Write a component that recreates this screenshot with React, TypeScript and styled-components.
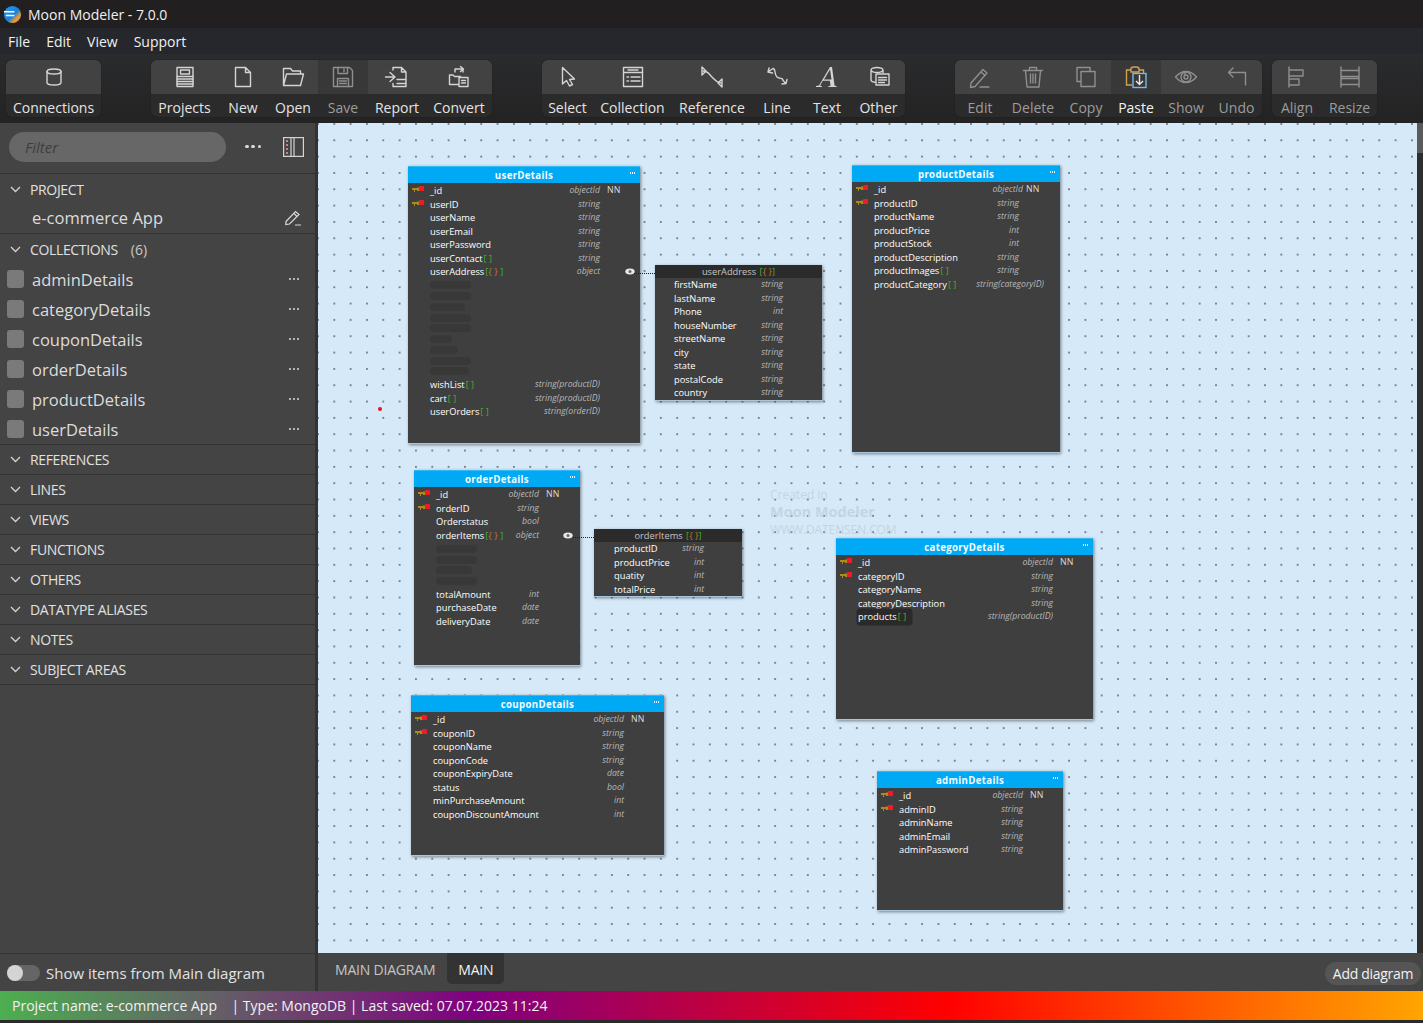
import React from "react";
import styled, { createGlobalStyle } from "styled-components";

const Global = createGlobalStyle`
  html, body { margin: 0; padding: 0; height: 100%; overflow: hidden; background: #2a2a2a; }
  * { box-sizing: border-box; }
  #root { height: 100%; font-family: "Open Sans", "Noto Sans", sans-serif; }
`;

const Page = styled.div`
  width: 1423px; height: 1023px; display: flex; flex-direction: column; background: #262626; color: #eee;
`;
const TitleBar = styled.div`
  height: 28px; flex: none; display: flex; align-items: center; gap: 6px; padding-left: 3px;
  background: #211f1f; font-size: 14px; color: #f0f0f0;
`;
const MenuBar = styled.div`
  height: 26px; flex: none; display: flex; align-items: center; gap: 16px; padding-left: 8px;
  background: #25272c; font-size: 14px; color: #f0f0f0;
`;
const Toolbar = styled.div`
  height: 69px; flex: none; padding: 6px 0 0 6px; display: flex; align-items: flex-start;
  background: linear-gradient(#2a2b2d, #232323);
`;
const ToolGroup = styled.div<{ $gap: number }>`
  margin-right: ${p => p.$gap}px; display: flex; height: 57px; border-radius: 6px; overflow: hidden;
  background: #2b2b2b; box-shadow: 0 0 1px #111;
`;
const ToolItem = styled.div<{ $w: number; $dim?: boolean; $hi?: boolean; $bright?: boolean }>`
  width: ${p => p.$w}px; display: flex; flex-direction: column; align-items: center;
  font-size: 14px; color: ${p => (p.$bright ? "#f2f2f2" : p.$dim ? "#9c9c9c" : "#e4e4e4")};
`;
const ToolIcon = styled.div<{ $hi?: boolean }>`
  width: 100%; height: 34px; flex: none; display: flex; align-items: center; justify-content: center;
  background: ${p => (p.$hi ? "#383838" : "#424242")};
`;
const ToolLabel = styled.div`
  height: 23px; line-height: 27px; white-space: nowrap;
`;
const Main = styled.div`
  flex: 1; min-height: 0; display: flex;
`;
const Sidebar = styled.div`
  width: 315px; flex: none; display: flex; flex-direction: column; background: #444;
`;
const Divider = styled.div`
  width: 3px; flex: none; background: #333;
`;
const FilterRow = styled.div`
  height: 51px; flex: none; display: flex; align-items: center; padding: 0 0 3px 9px; border-bottom: 1px solid #333;
`;
const FilterPill = styled.div`
  width: 217px; height: 30px; border-radius: 15px; background: #676767; padding: 0 16px;
  display: flex; align-items: center; font-size: 15px; font-style: italic; color: #3e3e3e;
`;
const Dots = styled.div`
  margin-left: 19px; width: 16px; display: flex; justify-content: space-between;
  span { width: 3.5px; height: 3.5px; border-radius: 50%; background: #d8d8d8; }
`;
const SectionRow = styled.div`
  height: 30px; flex: none; display: flex; align-items: center; padding-left: 10px; gap: 9px;
  font-size: 14px; color: #e0e0e0; letter-spacing: -0.35px; border-bottom: 1px solid #333;
`;
const SectionOpen = styled(SectionRow)`
  border-bottom: none;
`;
const Count = styled.span`
  margin-left: 4px; letter-spacing: 0; color: #c8c8c8;
`;
const ProjectRow = styled.div`
  height: 30px; flex: none; display: flex; align-items: center; justify-content: space-between;
  padding: 0 14px 2px 32px; font-size: 16.5px; color: #dcdcdc; border-bottom: 1px solid #333;
`;
const CollectionList = styled.div`
  display: flex; flex-direction: column; border-bottom: 1px solid #333;
`;
const CollectionRow = styled.div`
  height: 30px; display: flex; align-items: center; padding: 0 16px 0 7px; font-size: 16.5px; color: #dcdcdc;
`;
const Swatch = styled.div`
  width: 17px; height: 18px; border-radius: 3px; background: #7a7a7a; margin-right: 8px;
`;
const CollectionName = styled.span`
  flex: 1;
`;
const MiniDots = styled.div`
  display: flex; gap: 1.5px;
  span { width: 2.5px; height: 2.5px; border-radius: 50%; background: #d8d8d8; }
`;
const SideBottom = styled.div`
  margin-top: auto; height: 38px; flex: none; display: flex; align-items: center; gap: 6px; padding-left: 7px;
  border-top: 1px solid #333; font-size: 15px; color: #e2e2e2;
`;
const Toggle = styled.div`
  width: 33px; height: 16px; border-radius: 8px; background: #656565; position: relative;
  &::before { content: ""; position: absolute; left: 0; top: 0; width: 16px; height: 16px; border-radius: 50%; background: #d4d4d4; }
`;
const Right = styled.div`
  flex: 1; min-width: 0; display: flex; flex-direction: column;
`;
const CanvasRow = styled.div`
  flex: 1; min-height: 0; display: flex;
`;
const Canvas = styled.div`
  flex: 1; position: relative; overflow: hidden; background-color: #d6e9f8;
  background-image: radial-gradient(circle at 1px 1px, #7d858c 0, #7d858c 1px, transparent 1.3px);
  background-size: 16.33px 16.33px; background-position: -1px 0px;
`;
const Scrollbar = styled.div`
  width: 6px; flex: none; background: #2e2e2e;
  &::before { content: ""; display: block; height: 30px; background: #5a5a5a; }
`;
const TabBar = styled.div`
  height: 38px; flex: none; display: flex; align-items: flex-start; background: #444; padding-left: 17px; font-size: 14px;
`;
const Tab = styled.div`
  height: 31px; line-height: 33px; color: #c4c4c4; letter-spacing: -0.2px; margin-right: 12px;
`;
const ActiveTab = styled.div`
  height: 31px; line-height: 33px; padding: 0 11px; color: #f2f2f2; background: #333; border-radius: 0 0 5px 5px; letter-spacing: -0.2px;
`;
const AddButton = styled.div`
  margin: 9px 2px 0 auto; height: 23px; line-height: 23px; width: 96px; text-align: center; border-radius: 12px;
  background: #555; color: #f2f2f2; font-size: 14px; letter-spacing: -0.3px;
`;
const StatusBar = styled.div`
  height: 29px; flex: none; display: flex; align-items: center; padding: 0 0 1px 12px; white-space: pre;
  background: linear-gradient(90deg, #4caf50, #800080 33.3%, #f00 66.6%, #ffa500); font-size: 14px; color: #f2f2f2;
`;
const FootEdge = styled.div`
  height: 3px; flex: none; background: #2a2a2a;
`;

const Node = styled.div<{ $x: number; $y: number; $w: number; $h: number }>`
  position: absolute; left: ${p => p.$x - 318}px; top: ${p => p.$y - 123}px; width: ${p => p.$w}px; height: ${p => p.$h}px;
  background: #3f3f3f; box-shadow: 1px 1px 3px rgba(0,0,0,.45); border: 1px solid #a9c6dc; border-width: 0 0 1px 0;
  font-size: 9.3px; color: #fff;
`;
const NodeHead = styled.div`
  height: 17px; background: #00a9f4; border-top: 1px solid #35b9f5; position: relative; text-align: center;
  font-weight: 700; font-size: 9.7px; line-height: 17px; letter-spacing: 0.3px; color: #f4fbff;
`;
const HeadDots = styled.div`
  position: absolute; right: 5px; top: 5px; display: flex; gap: 0.5px;
  span { width: 1.5px; height: 1.5px; background: #eaf6ff; }
`;
const SubHead = styled.div`
  height: 13px; background: #2b2b2b; text-align: center; line-height: 13px; color: #c4c4c4; font-size: 9.3px; font-weight: 400;
`;
const Rows = styled.div<{ $sub?: boolean }>`
  padding-top: ${p => (p.$sub ? 0 : 1)}px;
`;
const Row = styled.div<{ $x: number; $end: number }>`
  position: relative; height: 13.5px; line-height: 13.5px; display: grid; grid-template-columns: ${p => p.$x}px 1fr auto ${p => p.$end}px;
  white-space: nowrap;
`;
const Name = styled.span<{ $sel?: boolean }>`
  color: #fff; grid-column: 2;
  ${p => p.$sel ? "background: #2a2a2a; border-radius: 2px; box-shadow: 0 0 0 1.5px #2a2a2a; justify-self: start; padding-right: 5px;" : ""}
`;
const Bracket = styled.span`
  color: #3fae2f; margin-left: 1px;
  b { color: #b97b2a; font-weight: 400; }
`;
const TypeText = styled.span`
  font-style: italic; color: #b8b8b8; font-size: 8.7px;
`;
const NN = styled.span`
  padding-left: 7px; color: #dcdcdc; font-size: 8.8px; letter-spacing: 0.2px;
`;
const KeySlot = styled.span`
  position: absolute; left: 4px; top: 2px; line-height: 0;
`;
const EyeSlot = styled.span<{ $left: number }>`
  position: absolute; left: ${p => p.$left}px; top: 3px; line-height: 0;
`;
const Ghost = styled.div<{ $w: number; $x: number }>`
  height: 8px; width: ${p => p.$w}px; margin: 2.75px 0 2.75px ${p => p.$x}px; border-radius: 4px; background: #383838;
`;
const Link = styled.div<{ $x: number; $y: number; $w: number }>`
  position: absolute; left: ${p => p.$x - 318}px; top: ${p => p.$y - 123}px; width: ${p => p.$w}px; border-top: 1px dotted #222;
`;
const RedDot = styled.div`
  position: absolute; left: 60px; top: 284px; width: 4px; height: 4px; border-radius: 50%; background: #e8141c;
`;
const Watermark = styled.div`
  position: absolute; left: 452px; top: 364px; color: #c3d5e3; font-size: 12px; line-height: 15px; white-space: nowrap;
  strong { display: block; font-size: 14.5px; line-height: 20px; }
  span { display: block; letter-spacing: -0.1px; }
`;

const S: React.FC<{ children: React.ReactNode; w?: number; h?: number; c?: string }> = ({ children, w = 26, h = 26, c = "#d4d4d4" }) => (
  <svg width={w} height={h} viewBox="0 0 26 26" fill="none" stroke={c} strokeWidth="1.4" strokeLinejoin="round" strokeLinecap="round">{children}</svg>
);

const icons: Record<string, (c?: string) => React.ReactNode> = {
  conn: c => <S c={c}><ellipse cx="13" cy="7.5" rx="7" ry="2.5" /><path d="M6 7.5v11c0 1.4 3.1 2.5 7 2.5s7-1.100 7-2.500v-11" /></S>,
  projects: c => <S c={c}><rect x="5" y="3.500" width="16" height="19" /><rect x="8.500" y="6" width="9" height="4" /><path d="M5 12.500h16M5 15h16M5 17.500h16M5 20h16" /></S>,
  file: c => <S c={c}><path d="M5.500 3.500h10l5 5v14h-15zM15.500 3.500v5h5" /></S>,
  open: c => <S c={c}><path d="M3.500 21.500v-17h7l2 2.500h8v3M3.500 21.500l3-11.500h17l-3 11.500z" /></S>,
  save: c => <S c={c}><path d="M3.500 3.500h16l3 3v16h-19z" /><path d="M8 3.500v6h9.500v-6M14 5v2.500M7.500 22.500v-8h11v8M9.500 17h7M9.500 19.500h7" /></S>,
  report: c => <S c={c}><path d="M9 6V3.500h8.500l4.500 4.500v14.500H9v-3M17.500 3.500V8H22M1.500 13h8M6 8.500l5 4.500-5 4.500M13 15.500h9M13 19.500h9" /></S>,
  convert: c => <S c={c}><path d="M9 8V5h8v3M14.500 2.500l3 2.500-3 2.500" /><path d="M3.500 20.500v-9.500h3.500l1.500 1.500h6v1M3.500 20.500h9M13 13.500h9v9h-9zM15.500 16.500h4M15.500 19h4" /></S>,
  select: c => <S c={c}><path d="M7.500 3.500v16.500l4-3.500 3 5.500 3-1.500-3-5 5-.5z" /></S>,
  collection: c => <S c={c}><rect x="3.500" y="3.500" width="19" height="19" /><path d="M3.500 8.500h19M8 6h10M7 13h1.500M11 13h9M7 17h1.500M11 17h9" /></S>,
  ref: c => <S c={c}><path d="M4 7c5 0 6 3 9 6s5 6 9 6" stroke={c} /><path d="M3 3v8l4-4zM23 15v8l-4-4z" /></S>,
  line: c => <S c={c}><path d="M4 8l5-3.500c3 0 1 6 4 8.500s6 0 6 3.500l3 3M4 8l4.500 1M4 8l1-4M22 19.500l-4 .5M22 19.500l1-4" /></S>,
  text: c => (
    <svg width="26" height="26" viewBox="0 0 26 26"><path d="M2 23h6l-.3-1-1.700-.2 2.800-5h7l.8 5-2 .2-.2 1h8l.2-1-2-.2L18 3h-2L5 21.500l-3 .5zM10 15.500l6-10 1.500 10z" fill={c} /></svg>
  ),
  other: c => <S c={c}><path d="M5 16V6c0-1.400 3-2.500 6-2.500s6 1.100 6 2.500v3M5 6c0 1.400 3 2.500 6 2.500s6-1.100 6-2.500M5 16c0 1 1.500 2 4 2.300" /><rect x="10" y="10" width="13" height="11" /><path d="M12.500 13.500h8M12.500 16h8M12.500 18.500h6" /></S>,
  edit: c => <S c={c}><path d="M4 19l12-13.500 4 3.500-12 13.500-4.500 1zM14 8l4 3.500M13 23h9" /></S>,
  trash: c => <S c={c}><path d="M3.500 6.500h19M9.500 6.500V3.500h7v3M5.500 6.500l1.500 16.500h12l1.500-16.500M10.500 10v9M13 10v9M15.500 10v9" /></S>,
  copy: c => <S c={c}><path d="M8 17.500H4V3.500h13v4" /><rect x="8" y="7.500" width="14" height="15" /></S>,
  paste: c => (
    <svg width="26" height="26" viewBox="0 0 26 26" fill="none" strokeWidth="1.4">
      <path d="M9 21H3.500V6H8M16 6h4.500v3M8 6V4l2-1h4l2 1v4H8z" stroke="#d2a24a" />
      <rect x="10" y="9.500" width="13" height="14" stroke="#7ab8e8" />
      <path d="M16.500 11v9M13 17l3.500 3.500L20 17" stroke="#e8e8e8" />
    </svg>
  ),
  show: c => <S c={c}><path d="M2.500 13C6 9 9 7.500 13 7.500S20 9 23.500 13C20 17 17 18.500 13 18.500S6 17 2.500 13z" /><circle cx="13" cy="13" r="5" /><circle cx="13" cy="13" r="2" /><path d="M12 8.500v3" /></S>,
  undo: c => <S c={c}><path d="M9 4L4.500 8.500 9 13M4.500 8.500H21.500V21" /></S>,
  align: c => <S c={c}><path d="M5 3v20M5 6h14v6H5M5 15h10v6H5" /></S>,
  resize: c => <S c={c}><path d="M4 3v20M22 3v20M4 6.500h18v6H4M4 14.500h18v6H4" /></S>,
};

type Tool = [string, string, number, ("dim" | "hi" | "bright" | "dimhi")?];
const groups: { gap: number; items: Tool[] }[] = [
  { gap: 50, items: [["conn", "Connections", 95]] },
  { gap: 50, items: [["projects", "Projects", 67], ["file", "New", 50], ["open", "Open", 50], ["save", "Save", 50, "dimhi"], ["report", "Report", 58], ["convert", "Convert", 66]] },
  { gap: 50, items: [["select", "Select", 51], ["collection", "Collection", 79], ["ref", "Reference", 80], ["line", "Line", 50], ["text", "Text", 50], ["other", "Other", 53]] },
  { gap: 10, items: [["edit", "Edit", 50], ["trash", "Delete", 56], ["copy", "Copy", 50], ["paste", "Paste", 50, "bright"], ["show", "Show", 50, "dim"], ["undo", "Undo", 51, "dim"]] },
  { gap: 0, items: [["align", "Align", 50], ["resize", "Resize", 55]] },
];
const dimKeys = new Set(["edit", "trash", "copy", "show", "undo", "align", "resize"]);

const Logo = () => (
  <svg width="19" height="19" viewBox="0 0 20 20">
    <defs>
      <linearGradient id="lg" x1="0" y1="0" x2="1" y2="1">
        <stop offset="0" stopColor="#1e9be8" /><stop offset="0.55" stopColor="#1b7fe0" /><stop offset="0.75" stopColor="#f0a020" /><stop offset="1" stopColor="#e040c0" />
      </linearGradient>
    </defs>
    <circle cx="10" cy="10" r="9" fill="url(#lg)" />
    <path d="M1 7h11M3 11h9" stroke="#fff" strokeWidth="1.6" />
  </svg>
);
const Chevron = () => (
  <svg width="11" height="7" viewBox="0 0 11 7" fill="none" stroke="#d4d4d4" strokeWidth="1.3"><path d="M1 1l4.500 4.500L10 1" /></svg>
);
const PanelIcon = () => (
  <svg width="21" height="20" viewBox="0 0 21 20" fill="none" stroke="#d4d4d4" strokeWidth="1.2" style={{ marginLeft: 22 }}>
    <rect x="0.600" y="0.600" width="19.800" height="18.800" /><path d="M8 .6v18.800M11 .6v18.800" />
    <path d="M3 4h2M3 8h2M3 12h2M3 16h2" stroke="#e8a0a0" strokeWidth="1.400" />
  </svg>
);
const Pencil = () => (
  <svg width="16" height="16" viewBox="0 0 16 16" fill="none" stroke="#d8d8d8" strokeWidth="1.200"><path d="M1 11.500L10.500 1.500l3.500 3L4.500 14 .8 14.500zM9 3.500l3 3M10 15h6" /></svg>
);
const Key = () => (
  <svg width="13" height="7" viewBox="0 0 13 7">
    <path d="M0 2h5v-.5h2V5H5V4H3v2H2V4H0z" fill="#b08a16" /><rect x="7" y="0" width="5" height="5" fill="#ee1c25" rx="0.5" />
  </svg>
);
const Eye = () => (
  <svg width="10" height="7" viewBox="0 0 10 7"><ellipse cx="5" cy="3.500" rx="4.700" ry="3" fill="#e8e8e8" /><circle cx="5" cy="3.500" r="1.500" fill="#666" /></svg>
);

type R = { n: string; b?: "arr" | "obj"; t?: string; key?: boolean; nn?: boolean; eye?: number; shift?: number; sel?: boolean } | { ghost: number };
type T = { name: string; x: number; y: number; w: number; h: number; nx: number; end: number; sub?: boolean; rows: R[] };

const s = "string", id = { n: "_id", t: "objectId", key: true, nn: true };
const tables: T[] = [
  { name: "userDetails", x: 408, y: 166, w: 232, h: 278, nx: 22, end: 40, rows: [id, { n: "userID", t: s, key: true }, { n: "userName", t: s }, { n: "userEmail", t: s }, { n: "userPassword", t: s }, { n: "userContact", b: "arr", t: s }, { n: "userAddress", b: "obj", t: "object", eye: 217 },
    { ghost: 41 }, { ghost: 41 }, { ghost: 35 }, { ghost: 41 }, { ghost: 41 }, { ghost: 22 }, { ghost: 28 }, { ghost: 41 }, { ghost: 39 },
    { n: "wishList", b: "arr", t: "string(productID)" }, { n: "cart", b: "arr", t: "string(productID)" }, { n: "userOrders", b: "arr", t: "string(orderID)" }] },
  { name: "userAddress", x: 655, y: 265, w: 167, h: 136, nx: 19, end: 39, sub: true, rows: ["firstName", "lastName", "Phone", "houseNumber", "streetName", "city", "state", "postalCode", "country"].map(n => ({ n, t: n === "Phone" ? "int" : s })) },
  { name: "productDetails", x: 852, y: 165, w: 208, h: 288, nx: 22, end: 41, rows: [{ ...id, shift: -4 }, { n: "productID", t: s, key: true }, { n: "productName", t: s }, { n: "productPrice", t: "int" }, { n: "productStock", t: "int" }, { n: "productDescription", t: s }, { n: "productImages", b: "arr", t: s }, { n: "productCategory", b: "arr", t: "string(categoryID)", shift: -25 }] },
  { name: "orderDetails", x: 414, y: 470, w: 166, h: 196, nx: 22, end: 41, rows: [id, { n: "orderID", t: s, key: true }, { n: "Orderstatus", t: "bool" }, { n: "orderItems", b: "obj", t: "object", eye: 149 }, { ghost: 41 }, { ghost: 41 }, { ghost: 36 }, { ghost: 41 }, { n: "totalAmount", t: "int" }, { n: "purchaseDate", t: "date" }, { n: "deliveryDate", t: "date" }] },
  { name: "orderItems", x: 594, y: 529, w: 148, h: 68, nx: 20, end: 38, sub: true, rows: [{ n: "productID", t: s }, { n: "productPrice", t: "int" }, { n: "quatity", t: "int" }, { n: "totalPrice", t: "int" }] },
  { name: "categoryDetails", x: 836, y: 538, w: 257, h: 182, nx: 22, end: 40, rows: [id, { n: "categoryID", t: s, key: true }, { n: "categoryName", t: s }, { n: "categoryDescription", t: s }, { n: "products", b: "arr", t: "string(productID)", sel: true }] },
  { name: "couponDetails", x: 411, y: 695, w: 253, h: 161, nx: 22, end: 40, rows: [id, { n: "couponID", t: s, key: true }, { n: "couponName", t: s }, { n: "couponCode", t: s }, { n: "couponExpiryDate", t: "date" }, { n: "status", t: "bool" }, { n: "minPurchaseAmount", t: "int" }, { n: "couponDiscountAmount", t: "int" }] },
  { name: "adminDetails", x: 877, y: 771, w: 186, h: 140, nx: 22, end: 40, rows: [id, { n: "adminID", t: s, key: true }, { n: "adminName", t: s }, { n: "adminEmail", t: s }, { n: "adminPassword", t: s }] },
];

const Brackets: React.FC<{ b?: "arr" | "obj" }> = ({ b }) =>
  b === "arr" ? <Bracket>[ ]</Bracket> : b === "obj" ? <Bracket>[<b>{"{ }"}</b> ]</Bracket> : null;

const TableNode: React.FC<{ t: T }> = ({ t }) => (
  <Node $x={t.x} $y={t.y} $w={t.w} $h={t.h}>
    {t.sub ? (
      <SubHead>{t.name} <Bracket>[<b>{"{ }"}</b>]</Bracket></SubHead>
    ) : (
      <NodeHead>{t.name}<HeadDots><span /><span /><span /></HeadDots></NodeHead>
    )}
    <Rows $sub={t.sub}>
      {t.rows.map((r, i) =>
        "ghost" in r ? <Ghost key={i} $w={r.ghost} $x={t.nx} /> : (
          <Row key={i} $x={t.nx} $end={t.end}>
            {r.key && <KeySlot><Key /></KeySlot>}
            <Name $sel={r.sel}>{r.n}<Brackets b={r.b} /></Name>
            <TypeText style={r.shift ? { marginRight: r.shift } : undefined}>{r.t}</TypeText>
            {r.nn ? <NN>NN</NN> : <span />}
            {r.eye !== undefined && <EyeSlot $left={r.eye}><Eye /></EyeSlot>}
          </Row>
        )
      )}
    </Rows>
  </Node>
);

const sections = ["REFERENCES", "LINES", "VIEWS", "FUNCTIONS", "OTHERS", "DATATYPE ALIASES", "NOTES", "SUBJECT AREAS"];
const collections = ["adminDetails", "categoryDetails", "couponDetails", "orderDetails", "productDetails", "userDetails"];

export default function App() {
  return (
    <Page>
      <Global />
      <TitleBar><Logo />Moon Modeler - 7.0.0</TitleBar>
      <MenuBar><span>File</span><span>Edit</span><span>View</span><span>Support</span></MenuBar>
      <Toolbar>
        {groups.map((g, gi) => (
          <ToolGroup key={gi} $gap={g.gap}>
            {g.items.map(([ic, label, w, st]) => {
              const dim = st === "dim" || st === "dimhi" || dimKeys.has(ic);
              return (
                <ToolItem key={label} $w={w} $dim={dim} $bright={st === "bright"}>
                  <ToolIcon $hi={st === "dimhi" || st === "bright"}>{icons[ic](dim ? "#8f8f8f" : "#d4d4d4")}</ToolIcon>
                  <ToolLabel>{label}</ToolLabel>
                </ToolItem>
              );
            })}
          </ToolGroup>
        ))}
      </Toolbar>
      <Main>
        <Sidebar>
          <FilterRow>
            <FilterPill>Filter</FilterPill>
            <Dots><span /><span /><span /></Dots>
            <PanelIcon />
          </FilterRow>
          <SectionOpen><Chevron />PROJECT</SectionOpen>
          <ProjectRow>e-commerce App<Pencil /></ProjectRow>
          <SectionOpen><Chevron />COLLECTIONS<Count>(6)</Count></SectionOpen>
          <CollectionList>
            {collections.map(c => (
              <CollectionRow key={c}><Swatch /><CollectionName>{c}</CollectionName><MiniDots><span /><span /><span /></MiniDots></CollectionRow>
            ))}
          </CollectionList>
          {sections.map(x => <SectionRow key={x}><Chevron />{x}</SectionRow>)}
          <SideBottom><Toggle />Show items from Main diagram</SideBottom>
        </Sidebar>
        <Divider />
        <Right>
          <CanvasRow>
            <Canvas>
              {tables.map(t => <TableNode key={t.name} t={t} />)}
              <Link $x={634} $y={273} $w={21} />
              <Link $x={573} $y={537} $w={21} />
              <RedDot />
              <Watermark>Created in<strong>Moon Modeler</strong><span>WWW.DATENSEN.COM</span></Watermark>
            </Canvas>
            <Scrollbar />
          </CanvasRow>
          <TabBar>
            <Tab>MAIN DIAGRAM</Tab>
            <ActiveTab>MAIN</ActiveTab>
            <AddButton>Add diagram</AddButton>
          </TabBar>
        </Right>
      </Main>
      <StatusBar>{"Project name: e-commerce App    | Type: MongoDB | Last saved: 07.07.2023 11:24"}</StatusBar>
      <FootEdge />
    </Page>
  );
}
